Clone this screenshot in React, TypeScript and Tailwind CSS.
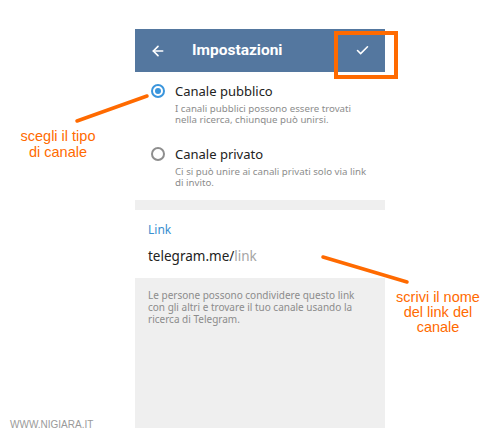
import { ArrowLeft, Check } from "lucide-react";

function Radio({ checked }: { checked: boolean }) {
  return (
    <div
      className={
        "w-[14px] h-[14px] rounded-full border-2 flex items-center justify-center shrink-0 " +
        (checked ? "border-[#3a95dc]" : "border-[#8e8e8e]")
      }
    >
      {checked && <div className="w-[6px] h-[6px] rounded-full bg-[#3a95dc]" />}
    </div>
  );
}

export default function App() {
  const options = [
    {
      id: 1,
      title: "Canale pubblico",
      desc: "I canali pubblici possono essere trovati nella ricerca, chiunque può unirsi.",
      checked: true,
    },
    {
      id: 2,
      title: "Canale privato",
      desc: "Ci si può unire ai canali privati solo via link di invito.",
      checked: false,
    },
  ];

  return (
    <div className="relative w-[500px] h-[440px] bg-white overflow-hidden font-['Noto_Sans',sans-serif]">
      <div className="pt-[29px] pl-[135px]">
        <div className="w-[250px] h-[399px] flex flex-col bg-[#efefef]">
          {/* Action bar */}
          <div className="h-[43px] bg-[#54779f] flex items-center text-white shrink-0">
            <ArrowLeft className="ml-[15px] w-[16px] h-[16px]" strokeWidth={2.5} />
            <span className="ml-[26px] font-['Roboto',sans-serif] font-bold text-[15.5px]">Impostazioni</span>
            <Check className="ml-auto mr-[15px] w-[15px] h-[15px]" strokeWidth={2.5} />
          </div>

          {/* Channel type */}
          <div className="bg-white h-[128px] pt-[10px] flex flex-col gap-[20px] shrink-0">
            {options.map((o) => (
              <div key={o.id} className="flex">
                <div className="w-[40px] shrink-0 flex pt-[2px] pl-[16px]">
                  <Radio checked={o.checked} />
                </div>
                <div className="w-[192px]">
                  <div className="text-[13px] leading-[18px] text-[#222]">{o.title}</div>
                  <div className="text-[9.7px] leading-[10.5px] text-[#8c8c8c] mt-[4px]">{o.desc}</div>
                </div>
              </div>
            ))}
          </div>

          <div className="h-[10px] shrink-0" />

          {/* Link */}
          <div className="bg-white h-[68px] px-[13px] pt-[13px] shrink-0">
            <div className="text-[12px] leading-[14px] text-[#3a8fd0]">Link</div>
            <div className="mt-[9px] text-[13.5px] leading-[20px] text-[#222]">
              telegram.me/<span className="text-[#a5a5a5]">link</span>
            </div>
          </div>

          <div className="px-[13px] pt-[11px] text-[10px] leading-[12px] text-[#8c8c8c]">
            Le persone possono condividere questo link con gli altri e trovare il tuo canale usando la ricerca di Telegram.
          </div>
        </div>
      </div>

      {/* Annotations */}
      <div className="absolute left-[334px] top-[31px] w-[64px] h-[48px] border-[4px] border-[#ff6a00]" />

      <svg className="absolute left-0 top-0" width="500" height="440">
        <line x1="77" y1="121" x2="147" y2="96" stroke="#ff6a00" strokeWidth="3.5" strokeLinecap="round" />
        <line x1="323" y1="257" x2="407" y2="282" stroke="#ff6a00" strokeWidth="3.5" strokeLinecap="round" />
      </svg>

      <div className="absolute left-[6px] top-[128px] w-[104px] text-center text-[14.5px] leading-[16px] text-[#ff6a00] font-['Liberation_Sans',sans-serif]">
        scegli il tipo
        <br />
        di canale
      </div>

      <div className="absolute left-[386px] top-[290px] w-[104px] text-center text-[14.5px] leading-[15px] text-[#ff6a00] font-['Liberation_Sans',sans-serif]">
        scrivi il nome
        <br />
        del link del
        <br />
        canale
      </div>

      <div className="absolute left-[10px] top-[417px] text-[10px] text-[#9a9a9a] font-['Liberation_Sans',sans-serif]">
        WWW.NIGIARA.IT
      </div>
    </div>
  );
}
